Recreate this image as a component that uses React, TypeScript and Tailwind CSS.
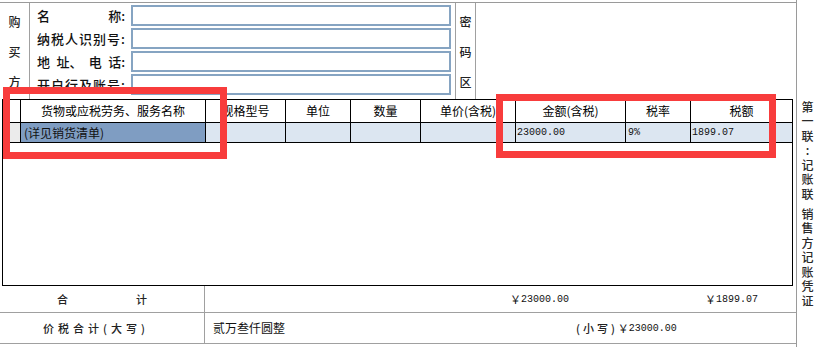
import React from "react";

const cols = [18, 185, 80, 65, 70, 95, 110, 65, 101];
const headers = ["", "货物或应税劳务、服务名称", "规格型号", "单位", "数量", "单价(含税)", "金额(含税)", "税率", "税额"];
const data = ["", "(详见销货清单)", "", "", "", "", "23000.00", "9%", "1899.07"];

function Label({ chars }: { chars: string[] }) {
  return (
    <div className="w-[101px] pl-[7px] pr-[6px] flex justify-between items-center text-[13px] font-medium leading-none text-[#111]">
      {chars.map((c, i) => (
        <span key={i}>{c}</span>
      ))}
    </div>
  );
}

export default function App() {
  const labels = [
    ["名", "称:"],
    ["纳", "税", "人", "识", "别", "号", ":"],
    ["地", "址、", "电", "话:"],
    ["开", "户", "行", "及", "账", "号", ":"],
  ];
  const vt = "[writing-mode:vertical-rl] [text-orientation:upright] text-[12px] leading-[21px] tracking-[2.5px] font-medium text-[#2a2a2a]";
  return (
    <div className="relative w-[818px] h-[347px] bg-white overflow-hidden flex font-['Noto_Sans_CJK_SC',sans-serif] text-black">
      <div className="w-[797px] flex flex-col border-r border-[#9a9a9a]">
        {/* top section */}
        <div className="mt-[2px] h-[97px] border-t border-[#9a9a9a] flex">
          <div className="w-[30px] border-r border-[#a0a0a0] flex flex-col items-center pt-[4px] text-[12px] font-medium text-[#222]">
            {["购", "买", "方"].map((c) => (
              <div key={c} className="h-[30px] flex items-center">{c}</div>
            ))}
          </div>
          <div className="w-[426px] border-r border-[#a0a0a0] pt-[2px] flex flex-col gap-[2px]">
            {labels.map((l, i) => (
              <div key={i} className="h-[21px] flex">
                <Label chars={l} />
                <div className="w-[320px] h-[21px] border-2 border-[#86a4c2] bg-white" />
              </div>
            ))}
          </div>
          <div className="w-[20px] border-r border-[#a0a0a0] flex flex-col items-center pt-[4px] text-[12px] font-medium text-[#222]">
            {["密", "码", "区"].map((c) => (
              <div key={c} className="h-[30px] flex items-center">{c}</div>
            ))}
          </div>
          <div className="flex-1" />
        </div>
        {/* table box */}
        <div className="ml-[2px] w-[791px] h-[187px] border border-black flex flex-col">
          <div className="h-[23px] border-b border-black flex">
            {headers.map((h, i) => (
              <div
                key={i}
                style={{ width: cols[i] }}
                className={`h-full flex items-center justify-center text-[12px] leading-none bg-white ${i < 8 ? "border-r border-black" : ""}`}
              >
                {h}
              </div>
            ))}
          </div>
          <div className="h-[20px] border-b border-black flex">
            {data.map((d, i) => (
              <div
                key={i}
                style={{ width: cols[i] }}
                className={`h-full flex items-center ${i < 8 ? "border-r border-black" : ""} ${
                  i === 0 ? "bg-[#ebebeb]" : i === 1 ? "bg-[#7f9dc2] pl-[3px] text-[12px] text-[#111]" : "bg-[#dce6f1] pl-[1px] font-['Liberation_Mono',monospace] text-[10px] text-[#111]"
                } ${i === 7 ? "pl-[2px]" : ""}`}
              >
                {d}
              </div>
            ))}
          </div>
          <div className="flex-1" />
        </div>
        {/* 合计 */}
        <div className="h-[27px] border-b border-[#a0a0a0] flex">
          <div className="w-[205px] border-r border-[#a0a0a0] flex items-center justify-center gap-[68px] text-[11px] font-medium text-[#222]">
            <span>合</span>
            <span>计</span>
          </div>
          <div className="flex-1 flex items-center pl-[305px] text-[#111]">
            <span className="w-[195px] flex items-center">
              <span className="text-[11px]">￥</span>
              <span className="font-['Liberation_Mono',monospace] text-[10px]">23000.00</span>
            </span>
            <span className="flex items-center">
              <span className="text-[11px]">￥</span>
              <span className="font-['Liberation_Mono',monospace] text-[10px]">1899.07</span>
            </span>
          </div>
        </div>
        {/* 价税合计 */}
        <div className="h-[31px] border-b border-[#a0a0a0] flex">
          <div className="w-[205px] border-r border-[#a0a0a0] flex items-center pl-[43px] text-[11px] font-medium tracking-[4px] text-[#222]">
            价税合计(大写)
          </div>
          <div className="flex-1 flex items-center text-[#111]">
            <span className="pl-[8px] w-[371px] text-[12px]">贰万叁仟圆整</span>
            <span className="text-[11px] font-medium tracking-[3px] text-[#222]">(小写)</span>
            <span className="text-[11px]">￥</span>
            <span className="font-['Liberation_Mono',monospace] text-[10px]">23000.00</span>
          </div>
        </div>
        <div className="flex-1" />
      </div>
      {/* right vertical text */}
      <div className="w-[21px] flex flex-col items-center gap-[5px] pt-[101px]">
        <div className={vt}>第一联:记账联</div>
        <div className={vt}>销售方记账凭证</div>
      </div>
      {/* red annotation boxes */}
      <div className="absolute left-[3px] top-[87px] w-[224px] h-[72px] border-[7px] border-[#f83c3c] pointer-events-none" />
      <div className="absolute left-[496px] top-[94px] w-[280px] h-[64px] border-[7px] border-[#f83c3c] pointer-events-none" />
    </div>
  );
}
